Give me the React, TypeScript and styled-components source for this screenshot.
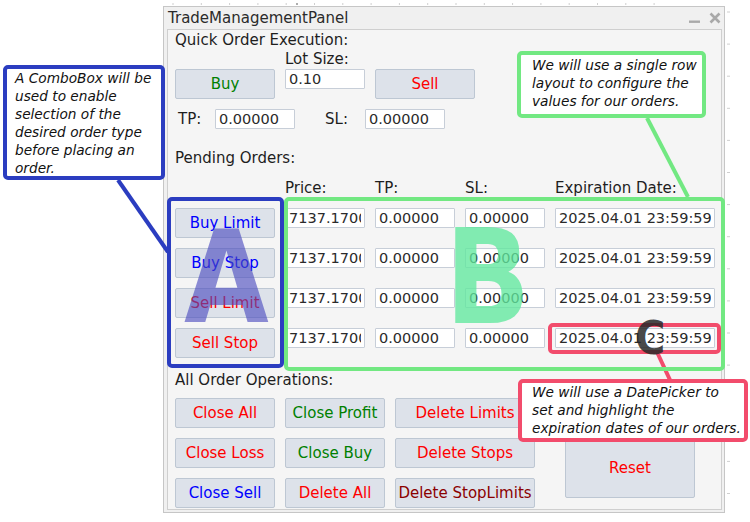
import React from 'react';
import styled, { createGlobalStyle } from 'styled-components';

const UI_FONT = '"DejaVu Sans", Verdana, sans-serif';

const RED = '#ff0000';
const GREEN = '#008000';
const BLUE = '#0000ff';
const MAROON = '#8b0000';

const NOTE_BLUE = '#2b3dc0';
const NOTE_GREEN = '#72e882';
const NOTE_PINK = '#f24c6c';

const GlobalStyle = createGlobalStyle`
  html, body {
    margin: 0;
    padding: 0;
    background: #ffffff;
  }
  body {
    font-family: ${UI_FONT};
  }
`;

const Page = styled.div`
  position: relative;
  width: 750px;
  height: 522px;
  overflow: hidden;
  box-sizing: border-box;
  padding: 6px 0 0 163px;
`;

const Window = styled.div`
  width: 562px;
  height: 507px;
  box-sizing: border-box;
  border: 1px solid #c6c6c6;
  background: #f0f0f0;
  display: flex;
  flex-direction: column;
`;

const TitleBar = styled.div`
  height: 22px;
  display: flex;
  align-items: center;
  padding: 0 3px 0 4px;
  font-size: 15px;
  line-height: 22px;
  color: #2b2b2b;
`;

const Title = styled.span`
  flex: 1;
`;

const TitleIcons = styled.div`
  display: flex;
  align-items: center;
  gap: 8px;
`;

const Client = styled.div`
  flex: 1;
  margin: 0 2px 2px 3px;
  border: 1px solid #cfcfcf;
  background: #f5f5f5;
  padding: 0 0 0 7px;
  color: #1e1e1e;
  font-size: 15px;
`;

const SectionLabel = styled.div<{ $mt?: number }>`
  height: 20px;
  line-height: 20px;
  margin-top: ${(p) => p.$mt ?? 0}px;
  white-space: nowrap;
`;

const QuickGrid = styled.div`
  display: grid;
  grid-template-columns: 100px 80px 100px;
  grid-template-rows: 19px 30px;
  column-gap: 10px;
`;

const LotLabel = styled.div`
  grid-column: 2;
  line-height: 19px;
  white-space: nowrap;
`;

const StopsRow = styled.div`
  display: flex;
  align-items: center;
  height: 20px;
  margin-top: 10px;
`;

const InlineLabel = styled.span<{ $w: number; $indent: number }>`
  width: ${(p) => p.$w}px;
  box-sizing: border-box;
  padding-left: ${(p) => p.$indent}px;
  line-height: 20px;
`;

const PendingGrid = styled.div`
  display: grid;
  grid-template-columns: 100px 80px 80px 80px 160px;
  grid-template-rows: 20px repeat(4, 30px);
  column-gap: 10px;
  row-gap: 10px;
  margin-top: 10px;
`;

const ColHead = styled.div`
  line-height: 20px;
  white-space: nowrap;
`;

const OpsArea = styled.div`
  display: flex;
  align-items: flex-start;
  gap: 30px;
  margin-top: 8px;
`;

const OpsGrid = styled.div`
  display: grid;
  grid-template-columns: 100px 100px 140px;
  grid-auto-rows: 30px;
  column-gap: 10px;
  row-gap: 10px;
`;

const Btn = styled.button<{ $tone: string; $w?: number; $h?: number; $mt?: number }>`
  width: ${(p) => (p.$w ? `${p.$w}px` : '100%')};
  height: ${(p) => p.$h ?? 30}px;
  margin-top: ${(p) => p.$mt ?? 0}px;
  padding: 0;
  box-sizing: border-box;
  border: 1px solid #bdc7d3;
  border-radius: 2px;
  background: #dde2ea;
  color: ${(p) => p.$tone};
  font: 15px ${UI_FONT};
  white-space: nowrap;
  overflow: hidden;
  cursor: pointer;
`;

const Field = styled.input<{ $w?: number }>`
  width: ${(p) => (p.$w ? `${p.$w}px` : '100%')};
  height: 20px;
  align-self: start;
  box-sizing: border-box;
  margin: 0;
  padding: 0 3px;
  border: 1px solid #c7ced8;
  border-radius: 1px;
  background: #ffffff;
  color: #2a2a2a;
  font: 14.5px ${UI_FONT};
  outline: none;
`;

/* annotation layer drawn over the panel */

const Callout = styled.div<{ $color: string; $x: number; $y: number; $w: number; $h: number; $pad: number }>`
  position: absolute;
  left: ${(p) => p.$x}px;
  top: ${(p) => p.$y}px;
  width: ${(p) => p.$w}px;
  height: ${(p) => p.$h}px;
  box-sizing: border-box;
  padding-left: ${(p) => p.$pad}px;
  border: 4px solid ${(p) => p.$color};
  border-radius: 5px;
  background: #ffffff;
  color: #111111;
  font: italic 13.7px/18px ${UI_FONT};
  white-space: nowrap;
`;

const Frame = styled.div<{ $color: string; $x: number; $y: number; $w: number; $h: number }>`
  position: absolute;
  left: ${(p) => p.$x}px;
  top: ${(p) => p.$y}px;
  width: ${(p) => p.$w}px;
  height: ${(p) => p.$h}px;
  box-sizing: border-box;
  border: 4px solid ${(p) => p.$color};
  border-radius: 5px;
  pointer-events: none;
`;

const BigLetter = styled.span<{ $color: string; $x: number; $y: number; $size: number; $sx: number }>`
  position: absolute;
  left: ${(p) => p.$x}px;
  top: ${(p) => p.$y}px;
  font: bold ${(p) => p.$size}px/1 ${UI_FONT};
  color: ${(p) => p.$color};
  transform: scaleX(${(p) => p.$sx});
  transform-origin: left top;
  pointer-events: none;
`;

const Lines = styled.svg`
  position: absolute;
  left: 0;
  top: 0;
  pointer-events: none;
`;

const pendingRows = [
  { label: 'Buy Limit', tone: BLUE },
  { label: 'Buy Stop', tone: BLUE },
  { label: 'Sell Limit', tone: RED },
  { label: 'Sell Stop', tone: RED },
];

const operations: [string, string][] = [
  ['Close All', RED],
  ['Close Profit', GREEN],
  ['Delete Limits', RED],
  ['Close Loss', RED],
  ['Close Buy', GREEN],
  ['Delete Stops', RED],
  ['Close Sell', BLUE],
  ['Delete All', RED],
  ['Delete StopLimits', MAROON],
];

const topTicks = Array.from({ length: 18 }, (_, i) => 173 + i * 28.3);
const sideTicks = Array.from({ length: 16 }, (_, i) => 12 + i * 32.1);

const MinimizeIcon = () => (
  <svg width="12" height="12" viewBox="0 0 12 12">
    <rect x="0" y="8.5" width="11" height="2.4" fill="#a9a9a9" />
  </svg>
);

const CloseIcon = () => (
  <svg width="12" height="12" viewBox="0 0 12 12">
    <path d="M1.5 1.5 L10.5 10.5 M10.5 1.5 L1.5 10.5" stroke="#a9a9a9" strokeWidth="2.6" />
  </svg>
);

const App: React.FC = () => {
  return (
    <Page>
      <GlobalStyle />
      <Window>
        <TitleBar>
          <Title>TradeManagementPanel</Title>
          <TitleIcons>
            <MinimizeIcon />
            <CloseIcon />
          </TitleIcons>
        </TitleBar>
        <Client>
          <SectionLabel>Quick Order Execution:</SectionLabel>
          <QuickGrid>
            <LotLabel>Lot Size:</LotLabel>
            <Btn $tone={GREEN} style={{ gridRow: 2 }}>Buy</Btn>
            <Field readOnly value="0.10" style={{ gridRow: 2 }} />
            <Btn $tone={RED} style={{ gridRow: 2 }}>Sell</Btn>
          </QuickGrid>
          <StopsRow>
            <InlineLabel $w={40} $indent={3}>TP:</InlineLabel>
            <Field readOnly value="0.00000" $w={80} />
            <InlineLabel $w={70} $indent={30}>SL:</InlineLabel>
            <Field readOnly value="0.00000" $w={80} />
          </StopsRow>

          <SectionLabel $mt={19}>Pending Orders:</SectionLabel>
          <PendingGrid>
            <span />
            <ColHead>Price:</ColHead>
            <ColHead>TP:</ColHead>
            <ColHead>SL:</ColHead>
            <ColHead>Expiration Date:</ColHead>
            {pendingRows.map((row) => (
              <React.Fragment key={row.label}>
                <Btn $tone={row.tone}>{row.label}</Btn>
                <Field readOnly value="7137.17000" />
                <Field readOnly value="0.00000" />
                <Field readOnly value="0.00000" />
                <Field readOnly value="2025.04.01 23:59:59" />
              </React.Fragment>
            ))}
          </PendingGrid>

          <SectionLabel $mt={12}>All Order Operations:</SectionLabel>
          <OpsArea>
            <OpsGrid>
              {operations.map(([label, tone]) => (
                <Btn key={label} $tone={tone}>{label}</Btn>
              ))}
            </OpsGrid>
            <Btn $tone={RED} $w={130} $h={60} $mt={40}>Reset</Btn>
          </OpsArea>
        </Client>
      </Window>

      <Lines width="750" height="522" viewBox="0 0 750 522">
        {topTicks.map((x) => (
          <line key={`t${x}`} x1={x} y1="3" x2={x} y2="5" stroke="#cfcfcf" strokeWidth="1" />
        ))}
        <line x1="297" y1="3" x2="297" y2="5" stroke="#8a8a8a" strokeWidth="1.4" />
        {sideTicks.map((y) => (
          <line key={`s${y}`} x1="727" y1={y} x2="730" y2={y} stroke="#cfcfcf" strokeWidth="1" />
        ))}
        <line x1="118" y1="180" x2="168" y2="252" stroke={NOTE_BLUE} strokeWidth="4" />
        <line x1="647" y1="118" x2="688" y2="197" stroke={NOTE_GREEN} strokeWidth="4" />
        <line x1="657" y1="352" x2="670" y2="380" stroke={NOTE_PINK} strokeWidth="4" />
      </Lines>

      <Frame $color={NOTE_BLUE} $x={167} $y={197} $w={117} $h={171} />
      <Frame $color={NOTE_GREEN} $x={284} $y={197} $w={441} $h={174} />
      <Frame $color={NOTE_PINK} $x={548} $y={323} $w={173} $h={31} />

      <BigLetter $color="rgba(72, 72, 190, 0.62)" $x={184} $y={213} $size={129} $sx={0.85}>A</BigLetter>
      <BigLetter $color="rgba(96, 232, 158, 0.78)" $x={445} $y={211} $size={132} $sx={0.85}>B</BigLetter>
      <BigLetter $color="rgba(40, 40, 40, 0.85)" $x={635} $y={315} $size={46} $sx={0.9}>C</BigLetter>

      <Callout $color={NOTE_BLUE} $x={3} $y={65} $w={162} $h={115} $pad={8}>
        A ComboBox will be<br />
        used to enable<br />
        selection of the<br />
        desired order type<br />
        before placing an<br />
        order.
      </Callout>
      <Callout $color={NOTE_GREEN} $x={517} $y={51} $w={189} $h={67} $pad={11} style={{ paddingTop: 1 }}>
        We will use a single row<br />
        layout to configure the<br />
        values for our orders.
      </Callout>
      <Callout $color={NOTE_PINK} $x={518} $y={379} $w={230} $h={63} $pad={10}>
        We will use a DatePicker to<br />
        set and highlight the<br />
        expiration dates of our orders.
      </Callout>
    </Page>
  );
};

export default App;
